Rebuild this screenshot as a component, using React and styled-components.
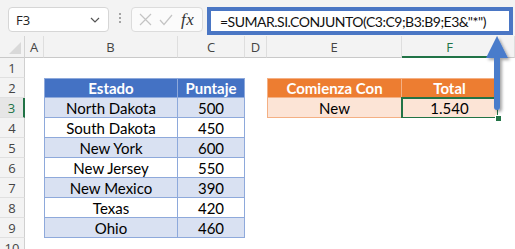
import React from "react";
import styled, { createGlobalStyle, css } from "styled-components";

const Global = createGlobalStyle`
  html, body { margin: 0; padding: 0; background: #fff; }
  body { font-family: "Open Sans", "Noto Sans", sans-serif; }
`;

const Root = styled.div`
  position: relative;
  width: 515px;
  height: 249px;
  overflow: hidden;
  background: #fff;
`;

const TopBar = styled.div`
  height: 36px;
  background: #f3f3f3;
  display: flex;
  align-items: flex-start;
  box-sizing: border-box;
`;

const NameBox = styled.div`
  flex-shrink: 0;
  margin: 7px 0 0 8px;
  width: 101px;
  height: 25px;
  box-sizing: border-box;
  background: #fff;
  border: 1px solid #d6d6d6;
  border-radius: 4px;
  display: flex;
  align-items: center;
  justify-content: space-between;
  padding: 0 8px 0 7px;
  font-family: "Open Sans", sans-serif;
  font-size: 13px;
  color: #222;
`;

const Grip = styled.div`
  flex-shrink: 0;
  width: 22px;
  height: 36px;
  display: flex;
  flex-direction: column;
  align-items: center;
  justify-content: center;
  gap: 2px;
  & > span {
    width: 2px;
    height: 2px;
    border-radius: 1px;
    background: #8a8a8a;
  }
`;

const FuncBox = styled.div`
  flex-shrink: 0;
  margin-top: 7px;
  width: 72px;
  height: 25px;
  box-sizing: border-box;
  background: #fbfbfb;
  border: 1px solid #dcdcdc;
  border-radius: 4px;
  display: flex;
  align-items: center;
  padding: 0 6px 0 7px;
  gap: 7px;
`;

const Fx = styled.span`
  font-family: "Liberation Serif", serif;
  font-style: italic;
  font-size: 17px;
  color: #333;
  margin-left: 1px;
  letter-spacing: 0.5px;
`;

const FormulaInput = styled.div`
  margin: 7px 2px 0 4px;
  flex: 1;
  min-width: 0;
  overflow: hidden;
  height: 28px;
  box-sizing: border-box;
  background: #fff;
  border: 4px solid #4a76c4;
  display: flex;
  align-items: center;
  padding-left: 9px;
  font-family: "Lato", sans-serif;
  font-size: 14px;
  letter-spacing: -0.5px;
  color: #111;
  white-space: nowrap;
`;

const Sheet = styled.div`
  display: grid;
  grid-template-columns: 25px 19px 134px 67px 22px 135px 96px 17px;
  grid-template-rows: 22px repeat(10, 20px);
`;

const Corner = styled.div`
  position: relative;
  background: #f3f3f3;
  border-right: 1px solid #d4d4d4;
  border-bottom: 1px solid #c9c9c9;
  box-sizing: border-box;
  &::after {
    content: "";
    position: absolute;
    right: 3px;
    bottom: 3px;
    width: 0;
    height: 0;
    border-left: 12px solid transparent;
    border-bottom: 12px solid #d9d9d9;
  }
`;

const ColHead = styled.div`
  background: #f3f3f3;
  box-sizing: border-box;
  border-right: 1px solid #dedede;
  border-bottom: ${(p) => (p.$active ? "2px solid #217346" : "1px solid #c9c9c9")};
  display: flex;
  align-items: center;
  justify-content: center;
  font-family: "Open Sans", sans-serif;
  font-size: 13px;
  color: ${(p) => (p.$active ? "#217346" : "#444")};
  padding-top: ${(p) => (p.$active ? "1px" : "0")};
`;

const RowHead = styled.div`
  background: ${(p) => (p.$active ? "#e6e6e6" : "#f3f3f3")};
  box-sizing: border-box;
  border-right: ${(p) => (p.$active ? "2px solid #217346" : "1px solid #d0d0d0")};
  border-bottom: 1px solid #e0e0e0;
  display: flex;
  align-items: center;
  justify-content: center;
  font-family: "Open Sans", sans-serif;
  font-size: 13px;
  color: ${(p) => (p.$active ? "#217346" : "#444")};
`;

const kinds = {
  empty: css`
    background: #fff;
  `,
  blueHead: css`
    background: #4472c4;
    color: #fff;
    font-weight: 700;
    border-right: 1px solid #8ea9db;
    border-bottom: 1px solid #8ea9db;
  `,
  blueBand: css`
    background: #d9e1f2;
    border-right: 1px solid #8ea9db;
    border-bottom: 1px solid #8ea9db;
  `,
  blueWhite: css`
    background: #fff;
    border-right: 1px solid #8ea9db;
    border-bottom: 1px solid #8ea9db;
  `,
  orangeHead: css`
    background: #ed7d31;
    color: #fff;
    font-weight: 700;
    border-right: 1px solid #f4b084;
    border-bottom: 1px solid #f4b084;
  `,
  orangeBody: css`
    background: #fce4d6;
    border-right: 1px solid #f4b084;
    border-bottom: 1px solid #f4b084;
  `,
};

const edge = (k) => (k && k.startsWith("orange") ? "#f4b084" : "#8ea9db");

const Cell = styled.div`
  position: relative;
  box-sizing: border-box;
  display: flex;
  align-items: center;
  justify-content: center;
  font-family: "Lato", sans-serif;
  font-size: 15px;
  color: #000;
  white-space: nowrap;
  ${(p) => kinds[p.$kind || "empty"]}
  ${(p) =>
    p.$first &&
    css`
      border-left: 1px solid ${edge(p.$kind)};
    `}
  ${(p) =>
    p.$top &&
    css`
      border-top: 1px solid ${edge(p.$kind)};
    `}
  ${(p) =>
    p.$selected &&
    css`
      &::after {
        content: "";
        position: absolute;
        left: -1px;
        top: -1px;
        right: -2px;
        bottom: -2px;
        border: 2px solid #217346;
        pointer-events: none;
      }
      &::before {
        content: "";
        position: absolute;
        right: -5px;
        bottom: -5px;
        width: 5px;
        height: 5px;
        background: #217346;
        border: 1px solid #fff;
        z-index: 2;
      }
    `}
`;

const ArrowLayer = styled.svg`
  position: absolute;
  left: 480px;
  top: 30px;
  overflow: visible;
`;

const cols = ["A", "B", "C", "D", "E", "F"];

const states = [
  ["North Dakota", "500"],
  ["South Dakota", "450"],
  ["New York", "600"],
  ["New Jersey", "550"],
  ["New Mexico", "390"],
  ["Texas", "420"],
  ["Ohio", "460"],
];

function buildRow(r) {
  const cells = Array(7).fill(null).map(() => ({ kind: "empty", text: "" }));
  if (r === 2) {
    cells[1] = { kind: "blueHead", text: "Estado", first: true, top: true };
    cells[2] = { kind: "blueHead", text: "Puntaje", top: true };
    cells[4] = { kind: "orangeHead", text: "Comienza Con", first: true, top: true };
    cells[5] = { kind: "orangeHead", text: "Total", top: true };
  } else if (r >= 3 && r <= 9) {
    const [s, v] = states[r - 3];
    const band = r % 2 === 1 ? "blueBand" : "blueWhite";
    cells[1] = { kind: band, text: s, first: true };
    cells[2] = { kind: band, text: v };
    if (r === 3) {
      cells[4] = { kind: "orangeBody", text: "New", first: true };
      cells[5] = { kind: "orangeBody", text: "1.540", selected: true };
    }
  }
  return cells;
}

export default function App() {
  const rows = [1, 2, 3, 4, 5, 6, 7, 8, 9, 10];
  return (
    <Root>
      <Global />
      <TopBar>
        <NameBox>
          <span>F3</span>
          <svg width="10" height="6" viewBox="0 0 10 6">
            <path d="M1 1 L5 5 L9 1" fill="none" stroke="#555" strokeWidth="1.2" />
          </svg>
        </NameBox>
        <Grip>
          <span />
          <span />
          <span />
        </Grip>
        <FuncBox>
          <svg width="13" height="13" viewBox="0 0 13 13">
            <path d="M1 1 L12 12 M12 1 L1 12" stroke="#c4c4c4" strokeWidth="1.2" fill="none" />
          </svg>
          <svg width="14" height="12" viewBox="0 0 14 12">
            <path d="M1 6 L5 10.5 L13 1" stroke="#c4c4c4" strokeWidth="1.2" fill="none" />
          </svg>
          <Fx>fx</Fx>
        </FuncBox>
        <FormulaInput>=SUMAR.SI.CONJUNTO(C3:C9;B3:B9;E3&amp;"*")</FormulaInput>
      </TopBar>
      <Sheet>
        <Corner />
        {cols.map((c) => (
          <ColHead key={c} $active={c === "F"}>
            {c}
          </ColHead>
        ))}
        <ColHead />
        {rows.map((r) => {
          const cells = buildRow(r);
          return (
            <React.Fragment key={r}>
              <RowHead $active={r === 3}>{r}</RowHead>
              {cells.map((c, i) => (
                <Cell
                  key={i}
                  $kind={c.kind}
                  $first={c.first}
                  $top={c.top}
                  $selected={c.selected}
                >
                  {c.text}
                </Cell>
              ))}
            </React.Fragment>
          );
        })}
      </Sheet>
      <ArrowLayer width="34" height="90" viewBox="0 0 34 90">
        <defs>
          <filter id="sh" x="-50%" y="-20%" width="200%" height="150%">
            <feDropShadow dx="2" dy="2" stdDeviation="1.6" floodColor="#000" floodOpacity="0.35" />
          </filter>
        </defs>
        <g filter="url(#sh)">
          <path
            d="M17 6 L28 28 L20 28 L20 77 Q20 80 17 80 Q14 80 14 77 L14 28 L6 28 Z"
            fill="#4a7bcb"
          />
        </g>
      </ArrowLayer>
    </Root>
  );
}
